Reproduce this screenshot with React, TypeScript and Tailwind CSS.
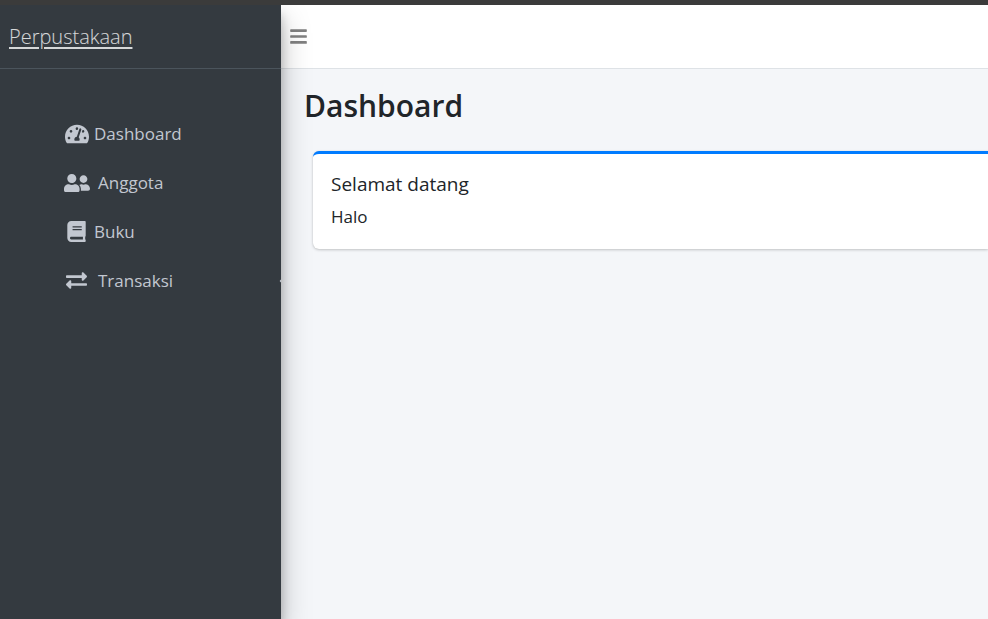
import type { IconType } from "react-icons";
import {
  FaAngleLeft,
  FaBars,
  FaBook,
  FaExchangeAlt,
  FaTachometerAlt,
  FaUserFriends,
} from "react-icons/fa";

type MenuItem = {
  label: string;
  icon: IconType;
  iconClass: string;
  gapClass: string;
  expandable?: boolean;
};

const menu: MenuItem[] = [
  { label: "Dashboard", icon: FaTachometerAlt, iconClass: "size-6", gapClass: "gap-1" },
  { label: "Anggota", icon: FaUserFriends, iconClass: "size-[26px]", gapClass: "gap-2" },
  { label: "Buku", icon: FaBook, iconClass: "size-[21px]", gapClass: "gap-1" },
  { label: "Transaksi", icon: FaExchangeAlt, iconClass: "size-[21px]", gapClass: "gap-2", expandable: true },
];

function Sidebar() {
  return (
    <aside className="z-10 w-[281px] shrink-0 overflow-hidden bg-[#343a40] text-[#c2c7d0] shadow-[0_14px_28px_rgba(0,0,0,0.25),0_10px_10px_rgba(0,0,0,0.22)]">
      <div className="flex h-16 items-center border-b border-[#4b545c] px-[9px]">
        <a href="#" className="text-[20px] font-light text-white/80 underline decoration-2 underline-offset-3">
          Perpustakaan
        </a>
      </div>
      <nav className="pt-10">
        <ul>
          {menu.map(({ label, icon: Icon, iconClass, gapClass, expandable }) => (
            <li key={label}>
              <a href="#" className={`flex h-[49px] items-center pl-[63px] text-[17px] ${gapClass}`}>
                <span className="flex w-[27px] justify-center">
                  <Icon className={iconClass} />
                </span>
                {label}
                {expandable && <FaAngleLeft className="-mr-[10px] ml-auto size-4 shrink-0" />}
              </a>
            </li>
          ))}
        </ul>
      </nav>
    </aside>
  );
}

export default function App() {
  return (
    <div className="flex min-h-screen flex-col overflow-hidden border-t-[5px] border-[#3b3b3b] bg-[#f4f6f9] font-['Open_Sans','Noto_Sans',sans-serif] text-[#212529]">
      <div className="flex grow">
        <Sidebar />
        <div className="min-w-0 grow">
          <header className="flex h-16 items-center border-b border-[#dee2e6] bg-white px-2">
            <button type="button" aria-label="Menu" className="text-[#808080]">
              <FaBars className="size-[19px]" />
            </button>
          </header>
          <main className="pl-[23px]">
            <h1 className="pt-4 text-[30px] leading-[42px] font-semibold">Dashboard</h1>
            <section className="mt-6 ml-[9px] rounded-l-md border-t-[3px] border-[#007bff] bg-white px-[18px] pt-[14px] pb-[15px] shadow-[0_0_1px_rgba(0,0,0,0.13),0_1px_3px_rgba(0,0,0,0.2)]">
              <h2 className="text-[19px] leading-8">Selamat datang</h2>
              <p className="text-[17px] leading-[34px]">Halo</p>
            </section>
          </main>
        </div>
      </div>
    </div>
  );
}
